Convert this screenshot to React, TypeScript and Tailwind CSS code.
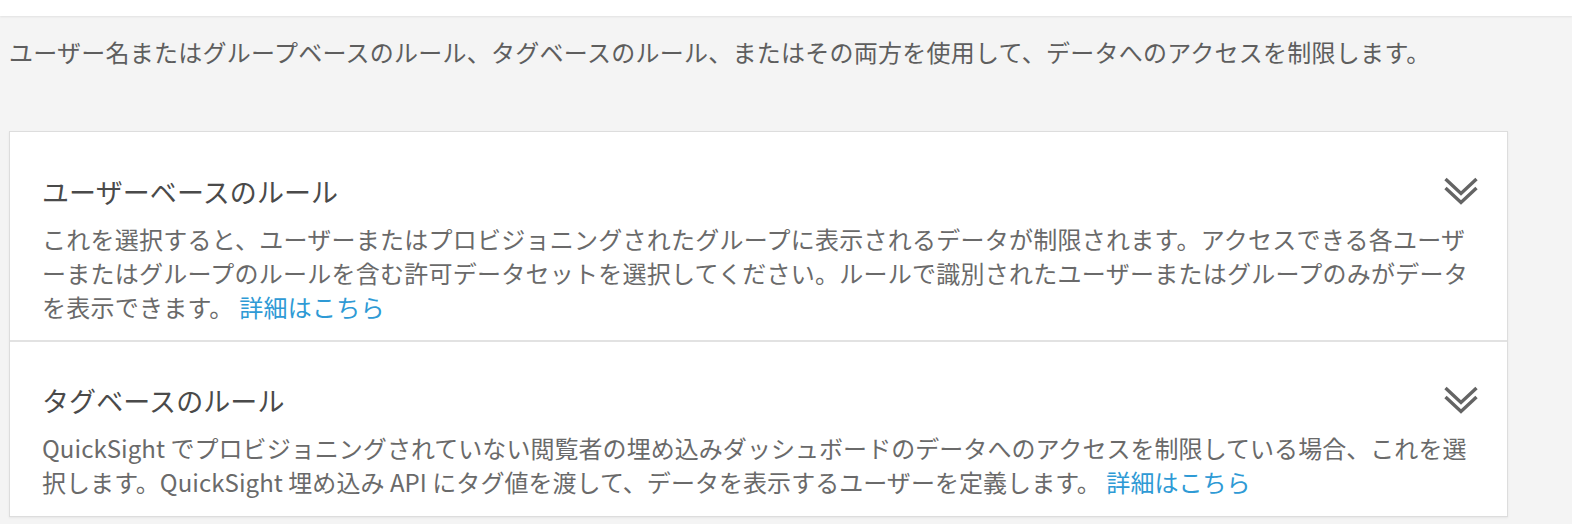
import React from 'react';

const ChevronDouble = () => (
  <svg width="36" height="30" viewBox="0 0 36 30" fill="none" className="shrink-0">
    <path d="M2.5 2 L18 16.5 L33.5 2" stroke="#646464" strokeWidth="3.4" />
    <path d="M2.5 11 L18 25.5 L33.5 11" stroke="#646464" strokeWidth="3.4" />
  </svg>
);

interface RuleSectionProps {
  title: string;
  children: React.ReactNode;
  last?: boolean;
}

const RuleSection = ({ title, children, last }: RuleSectionProps) => (
  <div className={`px-8 ${last ? 'pt-[40px] pb-[17px]' : 'pt-[41px] pb-[16px] border-b-2 border-[#e2e2e2]'}`}>
    <div className="flex items-center justify-between">
      <h2 className="text-[27px] leading-[38px] text-[#4a4a4a] font-normal tracking-[0.1px]">{title}</h2>
      <div className="mr-[-4px]">
        <ChevronDouble />
      </div>
    </div>
    <p className={`mt-[11px] text-[24px] leading-[34px] text-[#6a6a6a] ${last ? 'tracking-[0.05px]' : 'tracking-[0.25px]'}`}>
      {children}
    </p>
  </div>
);

export default function App() {
  return (
    <div
      className="min-h-[524px] w-[1572px] bg-[#f4f4f4]"
      style={{ fontFamily: '"Noto Sans CJK JP", "Noto Sans", sans-serif' }}
    >
      <div className="h-[16px] bg-white shadow-[0_1px_2px_rgba(0,0,0,0.08)]" />
      <p className="pl-[9px] pt-[19px] text-[24px] leading-[34px] text-[#5e5e5e] tracking-[0.26px]">
        ユーザー名またはグループベースのルール、タグベースのルール、またはその両方を使用して、データへのアクセスを制限します。
      </p>
      <div className="mt-[62px] ml-[9px] w-[1499px] bg-white border border-[#dddddd] shadow-[0_1px_2px_rgba(0,0,0,0.06)]">
        <RuleSection title="ユーザーベースのルール">
          これを選択すると、ユーザーまたはプロビジョニングされたグループに表示されるデータが制限されます。アクセスできる各ユーザーまたはグループのルールを含む許可データセットを選択してください。ルールで識別されたユーザーまたはグループのみがデータを表示できます。{' '}
          <a className="text-[#2e9ad5]">詳細はこちら</a>
        </RuleSection>
        <RuleSection title="タグベースのルール" last>
          QuickSight でプロビジョニングされていない閲覧者の埋め込みダッシュボードのデータへのアクセスを制限している場合、これを選択します。QuickSight 埋め込み API にタグ値を渡して、データを表示するユーザーを定義します。{' '}
          <a className="text-[#2e9ad5]">詳細はこちら</a>
        </RuleSection>
      </div>
    </div>
  );
}
